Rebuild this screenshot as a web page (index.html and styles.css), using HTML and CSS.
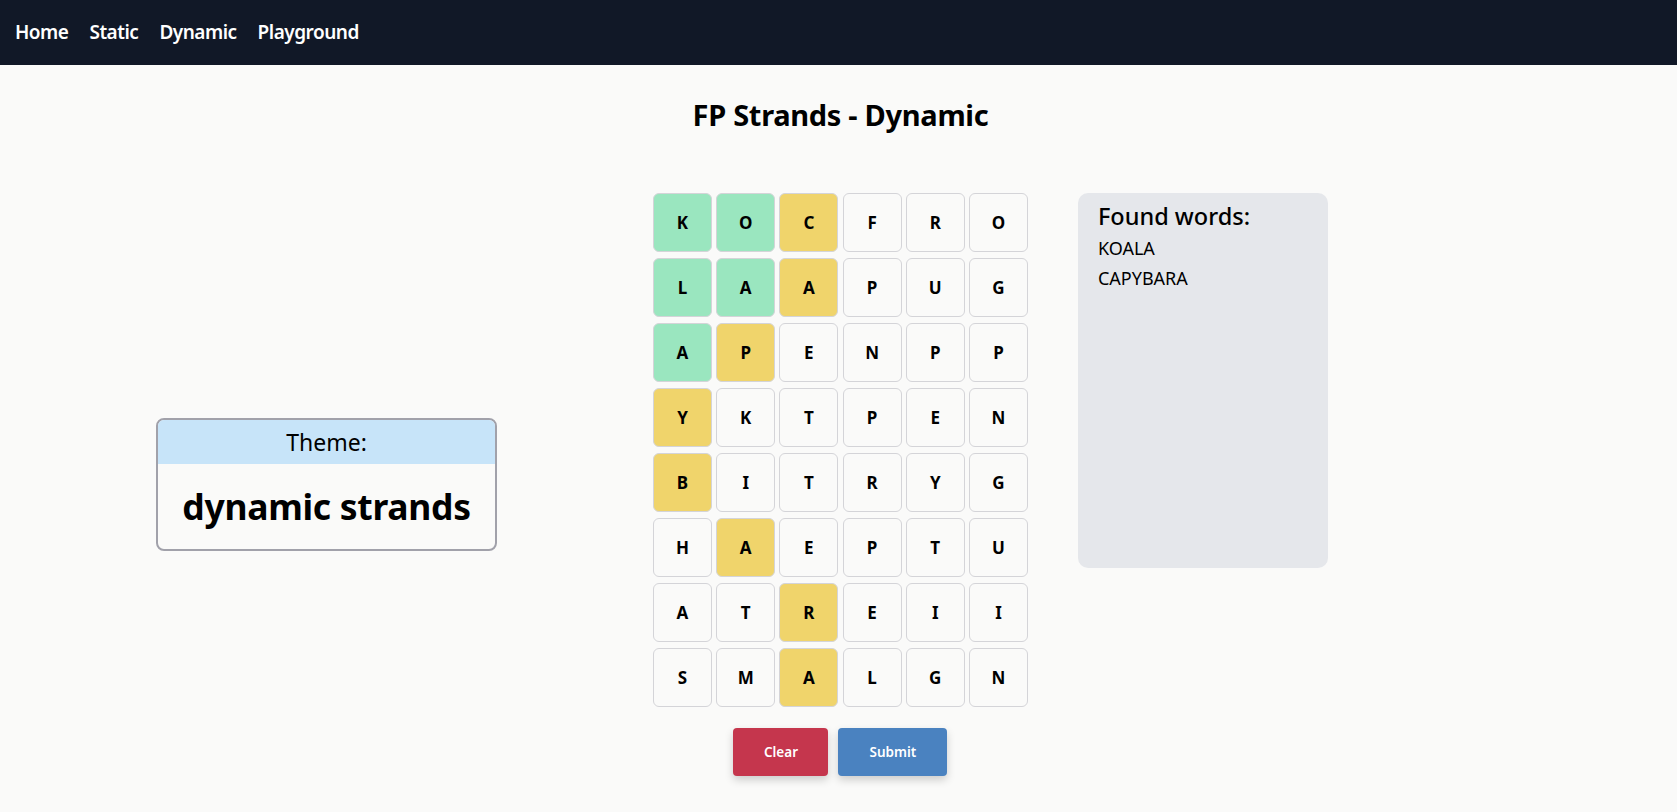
FILE: index.html
```html
<!DOCTYPE html>
<html>
<head>
<meta charset="utf-8">
<link rel="stylesheet" href="styles.css">
</head>
<body>
<nav class="nav">
  <a class="nav-link">Home</a>
  <a class="nav-link">Static</a>
  <a class="nav-link">Dynamic</a>
  <a class="nav-link">Playground</a>
</nav>
<main class="main">
  <h1 class="title">FP Strands - Dynamic</h1>
  <div class="game">
    <div class="left-col">
      <div class="theme">
        <div class="theme-head">Theme:</div>
        <div class="theme-body">dynamic strands</div>
      </div>
    </div>
    <div class="board-col">
      <div class="board">
        <div class="cell green">K</div><div class="cell green">O</div><div class="cell yellow">C</div><div class="cell">F</div><div class="cell">R</div><div class="cell">O</div>
        <div class="cell green">L</div><div class="cell green">A</div><div class="cell yellow">A</div><div class="cell">P</div><div class="cell">U</div><div class="cell">G</div>
        <div class="cell green">A</div><div class="cell yellow">P</div><div class="cell">E</div><div class="cell">N</div><div class="cell">P</div><div class="cell">P</div>
        <div class="cell yellow">Y</div><div class="cell">K</div><div class="cell">T</div><div class="cell">P</div><div class="cell">E</div><div class="cell">N</div>
        <div class="cell yellow">B</div><div class="cell">I</div><div class="cell">T</div><div class="cell">R</div><div class="cell">Y</div><div class="cell">G</div>
        <div class="cell">H</div><div class="cell yellow">A</div><div class="cell">E</div><div class="cell">P</div><div class="cell">T</div><div class="cell">U</div>
        <div class="cell">A</div><div class="cell">T</div><div class="cell yellow">R</div><div class="cell">E</div><div class="cell">I</div><div class="cell">I</div>
        <div class="cell">S</div><div class="cell">M</div><div class="cell yellow">A</div><div class="cell">L</div><div class="cell">G</div><div class="cell">N</div>
      </div>
      <div class="buttons">
        <button class="btn btn-clear">Clear</button>
        <button class="btn btn-submit">Submit</button>
      </div>
    </div>
    <div class="found">
      <div class="found-title">Found words:</div>
      <div class="found-word">KOALA</div>
      <div class="found-word">CAPYBARA</div>
    </div>
  </div>
</main>
</body>
</html>
```
FILE: styles.css
```css
* { box-sizing: border-box; }
html, body { margin: 0; padding: 0; }
body {
  background: #fafaf9;
  font-family: "Noto Sans", "Open Sans", sans-serif;
  color: #000;
  width: 1677px;
  height: 812px;
  overflow: hidden;
}
.nav {
  background: #111827;
  height: 65px;
  display: flex;
  align-items: center;
  gap: 21px;
  padding-left: 15px;
  padding-bottom: 2px;
}
.nav-link {
  color: #fff;
  font-size: 19px;
  font-weight: 600;
  letter-spacing: -0.5px;
}
.main {
  display: flex;
  flex-direction: column;
}
.title {
  margin: 28px 0 0 0;
  text-align: center;
  font-size: 29px;
  font-weight: 700;
  line-height: 44px;
  letter-spacing: -0.3px;
  padding-left: 4px;
}
.game {
  display: flex;
  align-items: center;
  margin-top: 56px;
  padding-left: 100px;
}
.left-col {
  width: 453px;
  display: flex;
  justify-content: center;
  margin-right: 100px;
}
.theme {
  width: 341px;
  border: 2px solid #a1a1aa;
  border-radius: 8px;
  overflow: hidden;
  margin-top: -1px;
}
.theme-head {
  background: #c7e4f9;
  height: 44px;
  text-align: center;
  font-size: 23px;
  line-height: 44px;
}
.theme-body {
  height: 85px;
  display: flex;
  align-items: center;
  justify-content: center;
  font-size: 35.5px;
  font-weight: 700;
  letter-spacing: -0.3px;
}
.board-col {
  display: flex;
  flex-direction: column;
  align-items: center;
}
.board {
  display: grid;
  grid-template-columns: repeat(6, 59px);
  grid-auto-rows: 59px;
  column-gap: 4.2px;
  row-gap: 6px;
}
.cell {
  border: 1px solid #d4d4d8;
  border-radius: 6px;
  background: #fafaf9;
  display: flex;
  align-items: center;
  justify-content: center;
  font-size: 17px;
  font-weight: 700;
}
.cell.green { background: #9ae6bf; }
.cell.yellow { background: #f0d46b; }
.buttons {
  display: flex;
  gap: 10px;
  margin-top: 21px;
}
.btn {
  border: none;
  border-radius: 4px;
  height: 48px;
  color: #fff;
  font-family: "Noto Sans", "Open Sans", sans-serif;
  font-size: 13.5px;
  font-weight: 600;
  box-shadow: 0 4px 8px rgba(0,0,0,0.18);
}
.btn-clear { background: #c5364d; width: 95px; }
.btn-submit { background: #4a82c0; width: 109px; }
.found {
  align-self: flex-start;
  margin-left: 50px;
  width: 250px;
  height: 375px;
  background: #e5e7eb;
  border-radius: 10px;
  padding: 6px 20px;
}
.found-title {
  font-size: 23.5px;
  font-weight: 500;
  line-height: 34px;
}
.found-word {
  font-size: 18px;
  line-height: 30px;
}
```
